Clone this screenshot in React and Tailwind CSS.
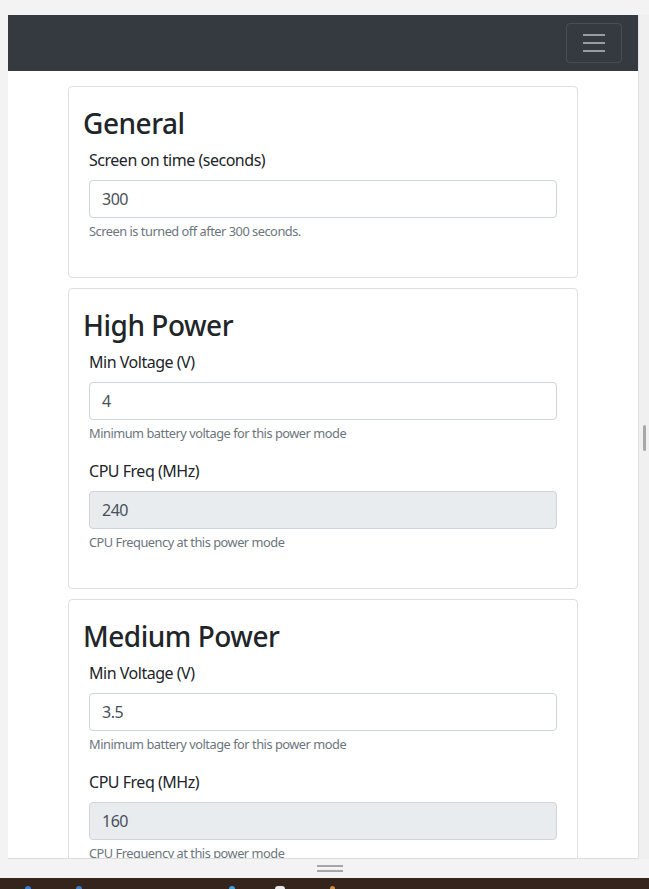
import React from 'react'

const font = { fontFamily: '"Noto Sans", "Open Sans", sans-serif', letterSpacing: '-0.03em' }

function Field({ label, value, help, disabled }) {
  return (
    <div className="mb-4">
      <label className="block mb-2 text-[16px] leading-6 text-[#212529]">{label}</label>
      <div
        className={
          'h-[38px] flex items-center px-3 border border-[#ced4da] rounded text-[16px] text-[#495057] ' +
          (disabled ? 'bg-[#e9ecef]' : 'bg-white')
        }
      >
        {value}
      </div>
      <small className="block mt-1 text-[12.8px] leading-[19px] text-[#6c757d]">{help}</small>
    </div>
  )
}

function Card({ title, children }) {
  return (
    <div className="border border-[#dfdfdf] rounded mb-[10px] bg-white">
      <div className="px-[20px] pt-[20px] pb-[20px]">
        <h3 className="-ml-[6px] mb-2 h-[33px] text-[28px] leading-[33px] font-medium text-[#212529]">{title}</h3>
        {children}
      </div>
    </div>
  )
}

export default function App() {
  return (
    <div className="w-[649px] h-[889px] bg-[#f3f3f3] flex flex-col overflow-hidden" style={font}>
      <div className="h-[15px] shrink-0" />
      <div className="flex h-[844px] shrink-0">
        <div className="w-[8px] shrink-0" />
        <div className="w-[630px] shrink-0 bg-white overflow-hidden border-b border-[#dcdcdc]">
          <nav className="h-[56px] bg-[#343a40] flex items-center justify-end px-4">
            <button className="w-[56px] h-[40px] border border-white/10 rounded flex items-center justify-center">
              <svg width="30" height="30" viewBox="0 0 30 30">
                <path d="M4 7h22M4 15h22M4 23h22" stroke="rgba(255,255,255,0.5)" strokeWidth="2" strokeMiterlimit="10" />
              </svg>
            </button>
          </nav>
          <div className="w-[540px] mx-auto px-[15px] pt-[15px]">
            <Card title="General">
              <Field label="Screen on time (seconds)" value="300" help="Screen is turned off after 300 seconds." />
            </Card>
            <Card title="High Power">
              <Field label="Min Voltage (V)" value="4" help="Minimum battery voltage for this power mode" />
              <Field label="CPU Freq (MHz)" value="240" help="CPU Frequency at this power mode" disabled />
            </Card>
            <Card title="Medium Power">
              <Field label="Min Voltage (V)" value="3.5" help="Minimum battery voltage for this power mode" />
              <Field label="CPU Freq (MHz)" value="160" help="CPU Frequency at this power mode" disabled />
            </Card>
          </div>
        </div>
        <div className="flex-1 bg-[#f0f0f0] border-l border-[#e2e2e2] flex justify-end items-start pr-[3px] pt-[410px]">
          <div className="w-[3px] h-[26px] bg-[#a8a8a8] rounded-sm" />
        </div>
      </div>
      <div className="h-[19px] shrink-0 flex flex-col items-center justify-center gap-[3px] pl-[10px]">
        <div className="w-[26px] h-[2px] bg-[#a6a6a6]" />
        <div className="w-[26px] h-[2px] bg-[#a6a6a6]" />
      </div>
      <div className="h-[11px] shrink-0 bg-[#34241b] flex items-end">
        <div className="ml-[25px] w-[6px] h-[3px] bg-[#2f7fd6] rounded-t" />
        <div className="ml-[45px] w-[6px] h-[3px] bg-[#3b7bd0] rounded-t" />
        <div className="ml-[147px] w-[6px] h-[3px] bg-[#3ba0e0] rounded-t" />
        <div className="ml-[40px] w-[10px] h-[3px] bg-[#e8e8e8] rounded-t" />
        <div className="ml-[45px] w-[5px] h-[3px] bg-[#d08a3a] rounded-t" />
      </div>
    </div>
  )
}
